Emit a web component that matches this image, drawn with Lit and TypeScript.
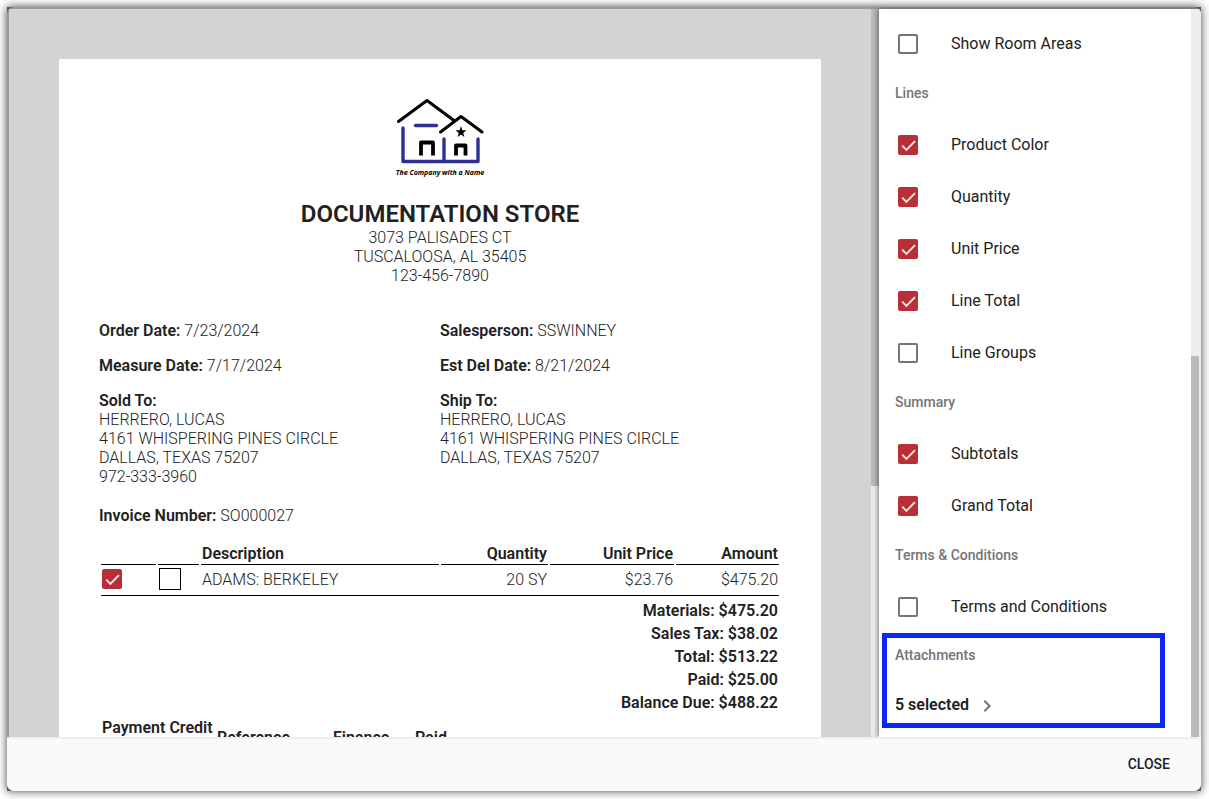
import { LitElement, html, css, svg } from "lit";
import { customElement, property } from "lit/decorators.js";

@customElement("tick-box")
export class TickBox extends LitElement {
  @property({ type: Boolean }) checked = false;
  @property({ type: Boolean }) plain = false;
  @property() label = "";
  @property() caption = "";

  static styles = css`
    :host { display: block; }
    .field { display: flex; align-items: center; cursor: pointer; }
    .box { display: grid; width: 20px; height: 20px; flex: none; }
    .plain { width: 22px; height: 22px; }
    .input, .mark { grid-area: 1 / 1; width: 100%; height: 100%; }
    .input {
      appearance: none; margin: 0; box-sizing: border-box;
      border: 2px solid #757575; border-radius: 2px; background: #fff;
    }
    .input:checked { background: #b92f37; border-color: #b92f37; }
    .plain .input { border: 1px solid #000; border-radius: 0; }
    .mark { pointer-events: none; z-index: 1; }
    .text { padding: 0 0 2px 33px; white-space: nowrap; }
  `;

  render() {
    return html`
      <label class="field">
        <span class="box ${this.plain ? "plain" : ""}">
          <input class="input" type="checkbox" .checked=${this.checked} aria-label=${this.label || this.caption} />
          ${this.checked
            ? html`<svg class="mark" viewBox="0 0 20 20" fill="none" stroke="#f7e4e5" stroke-width="1.9">
                <path d="M4.2 10.6 8.4 14.8 17 6.2" />
              </svg>`
            : ""}
        </span>
        ${this.caption ? html`<span class="text">${this.caption}</span>` : ""}
      </label>
    `;
  }
}

interface Option { name: string; on: boolean; }
interface Group { title: string; options: Option[]; }

const groups: Group[] = [
  { title: "", options: [{ name: "Show Room Areas", on: false }] },
  {
    title: "Lines",
    options: [
      { name: "Product Color", on: true },
      { name: "Quantity", on: true },
      { name: "Unit Price", on: true },
      { name: "Line Total", on: true },
      { name: "Line Groups", on: false },
    ],
  },
  {
    title: "Summary",
    options: [
      { name: "Subtotals", on: true },
      { name: "Grand Total", on: true },
    ],
  },
  { title: "Terms & Conditions", options: [{ name: "Terms and Conditions", on: false }] },
];

const totals: [string, string][] = [
  ["Materials:", "$475.20"],
  ["Sales Tax:", "$38.02"],
  ["Total:", "$513.22"],
  ["Paid:", "$25.00"],
  ["Balance Due:", "$488.22"],
];

const logoLines = svg`
  <g fill="none" stroke="#2e3192" stroke-width="3.4" stroke-linecap="round" stroke-linejoin="round">
    <path d="M13 29V62.500H88V40" />
    <path d="M54 40V62" />
    <path d="M25.500 26.500H46.500" />
  </g>
  <g fill="none" stroke="#000" stroke-width="3" stroke-linecap="round" stroke-linejoin="round">
    <path d="M8.500 22.500 37 1.500 64 21.500" />
    <path d="M50.500 33 71 17.500 92 33" />
  </g>
  <g fill="none" stroke="#000" stroke-width="3.800" stroke-linejoin="round">
    <path d="M31 56.500V43.500H43V56.500" />
    <path d="M66 56.500V46.500H75.500V56.500" />
  </g>
  <path d="M71 27 72.300 31.200 76.400 31.300 73.200 33.900 74.400 38 71 35.500 67.600 38 68.800 33.900 65.600 31.300 69.700 31.200Z" />
`;

@customElement("app-root")
export class AppRoot extends LitElement {
  static styles = css`
    :host {
      display: block; box-sizing: border-box; height: 100vh; padding: 7px 8px 8px 7px;
      background: #fff; overflow: hidden;
      font-family: Roboto, "Liberation Sans", sans-serif; font-size: 16px; line-height: 19px; color: #212121;
    }
    .backdrop { height: 100%; background: #55565a; box-shadow: 0 0 9px rgba(0, 0, 0, 0.75); }
    .dialog {
      height: 100%; display: flex; flex-direction: column; overflow: hidden;
      border-radius: 7px; background: #999;
    }
    .body { flex: 1; min-height: 0; display: flex; padding: 2px 0 0 2px; overflow: hidden; }
    .preview { flex: 1; min-width: 0; display: flex; background: #d3d3d3; }
    .viewport { flex: 1; min-width: 0; overflow: hidden; padding: 50px 50px 0; }
    .sheet { background: #fff; padding: 40px; min-height: 1000px; font-weight: 300; }
    .bar { width: 8px; flex: none; background: #ededed; display: flex; flex-direction: column; }
    .thumb { background: #bababa; }
    .thumb-top { height: 477px; }
    .thumb-low { flex: 1; margin-top: 347px; }

    .head { text-align: center; }
    .logo { display: block; margin: 0 auto; width: 100px; height: 80px; }
    .logo-text { font: italic 700 7px "Open Sans", sans-serif; }
    .store { margin: 21px 0 0; font-size: 24px; line-height: 28px; font-weight: 600; }
    .facts { display: grid; grid-template-columns: 1fr 1fr; row-gap: 16px; margin: 36px 0 20px; }
    .strong, .table th, .totals { font-weight: 600; }

    .table { width: 100%; margin-top: 16px; border-spacing: 2px; table-layout: fixed; }
    .table th, .table td { padding: 1px; }
    .lines th { border-bottom: 1px solid #000; }
    .lines .row td { padding-bottom: 3px; }
    .left { text-align: left; }
    .right { text-align: right; }
    .c1 { width: 55px; } .c2 { width: 41px; } .c4 { width: 107px; } .c5 { width: 124px; } .c6 { width: 103px; }
    .rule { border-top: 1px solid #000; height: 0; }
    .totals td { text-align: right; }
    .table.payments { margin-top: 0; }
    .p1 { width: 113px; } .p2 { width: 114px; } .p3 { width: 80px; }

    .panel {
      width: 320px; flex: none; display: flex; background: #fff; border-right: 2px solid #ededed; position: relative;
      box-shadow: -1px 0 5px rgba(0, 0, 0, 0.5);
    }
    .options { flex: 1; overflow: hidden; padding-top: 9px; }
    .caption {
      padding: 0 0 2px 16px; line-height: 47px; font-size: 14px; font-weight: 500; color: #757575; margin: 0;
    }
    .option { display: flex; align-items: center; height: 52px; padding-left: 19px; }
    .attachments { border: 5px solid #0a28f0; margin: 0 26px 0 3px; }
    .attachments .caption { padding-left: 8px; line-height: 34px; }
    .picker {
      display: flex; align-items: center; gap: 6px; padding: 12px 8px 0; height: 49px; border: 0;
      background: none; font: inherit; font-weight: 600; color: inherit;
    }
    .chevron { width: 24px; height: 24px; margin-top: 2px; }

    .footer {
      height: 50px; flex: none; border-top: 2px solid #eee; background: #fafafa; padding: 0 23px 2px 0;
      display: flex; align-items: center; justify-content: flex-end;
    }
    .close {
      border: 0; background: none; padding: 8px; font: inherit; font-size: 14px; font-weight: 500; color: #212121;
    }
  `;

  private fact(label: string, value: string) {
    return html`<div><span class="strong">${label}</span> ${value}</div>`;
  }

  render() {
    return html`
      <div class="backdrop">
        <div class="dialog" role="dialog" aria-label="Documentation Store">
          <div class="body">
            <main class="preview">
              <div class="viewport">
                <article class="sheet">
                  <header class="head">
                    <svg class="logo" viewBox="0 0 100 80" role="img" aria-label="Company logo">
                      ${logoLines}
                      <text class="logo-text" x="50" y="76" text-anchor="middle">The Company with a Name</text>
                    </svg>
                    <h1 class="store">DOCUMENTATION STORE</h1>
                    <div>3073 PALISADES CT</div>
                    <div>TUSCALOOSA, AL 35405</div>
                    <div>123-456-7890</div>
                  </header>
                  <section class="facts">
                    ${this.fact("Order Date:", "7/23/2024")} ${this.fact("Salesperson:", "SSWINNEY")}
                    ${this.fact("Measure Date:", "7/17/2024")} ${this.fact("Est Del Date:", "8/21/2024")}
                    <div>
                      <div class="strong">Sold To:</div>
                      <div>HERRERO, LUCAS</div>
                      <div>4161 WHISPERING PINES CIRCLE</div>
                      <div>DALLAS, TEXAS 75207</div>
                      <div>972-333-3960</div>
                    </div>
                    <div>
                      <div class="strong">Ship To:</div>
                      <div>HERRERO, LUCAS</div>
                      <div>4161 WHISPERING PINES CIRCLE</div>
                      <div>DALLAS, TEXAS 75207</div>
                    </div>
                  </section>
                  ${this.fact("Invoice Number:", "SO000027")}
                  <table class="table lines">
                    <colgroup>
                      <col class="c1" /><col class="c2" /><col /><col class="c4" /><col class="c5" /><col class="c6" />
                    </colgroup>
                    <thead>
                      <tr>
                        <th></th>
                        <th></th>
                        <th class="left">Description</th>
                        <th class="right">Quantity</th>
                        <th class="right">Unit Price</th>
                        <th class="right">Amount</th>
                      </tr>
                    </thead>
                    <tbody>
                      <tr class="row">
                        <td><tick-box checked label="Include line"></tick-box></td>
                        <td><tick-box plain label="Group line"></tick-box></td>
                        <td>ADAMS: BERKELEY</td>
                        <td class="right">20 SY</td>
                        <td class="right">$23.76</td>
                        <td class="right">$475.20</td>
                      </tr>
                      <tr><td class="rule" colspan="6"></td></tr>
                    </tbody>
                    <tfoot class="totals">
                      ${totals.map(([k, v]) => html`<tr><td colspan="6">${k} ${v}</td></tr>`)}
                    </tfoot>
                  </table>
                  <table class="table payments">
                    <colgroup><col class="p1" /><col class="p2" /><col class="p3" /><col /></colgroup>
                    <thead>
                      <tr>
                        <th class="left">Payment Credit<br />&nbsp;</th>
                        <th class="left">Reference</th>
                        <th class="left">Finance</th>
                        <th class="left">Paid</th>
                      </tr>
                    </thead>
                  </table>
                </article>
              </div>
              <div class="bar"><div class="thumb thumb-top"></div></div>
            </main>
            <aside class="panel">
              <div class="options">
                ${groups.map(
                  (g) => html`
                    <section>
                      ${g.title ? html`<h2 class="caption">${g.title}</h2>` : ""}
                      ${g.options.map(
                        (o) => html`<div class="option"><tick-box .checked=${o.on} .caption=${o.name}></tick-box></div>`
                      )}
                    </section>
                  `
                )}
                <section class="attachments">
                  <h2 class="caption">Attachments</h2>
                  <button class="picker" type="button">
                    5 selected
                    <svg class="chevron" viewBox="0 0 24 24" fill="none" stroke="#757575" stroke-width="2">
                      <path d="M9.300 6.700 14.600 12 9.300 17.300" />
                    </svg>
                  </button>
                </section>
              </div>
              <div class="bar"><div class="thumb thumb-low"></div></div>
            </aside>
          </div>
          <footer class="footer"><button class="close" type="button">CLOSE</button></footer>
        </div>
      </div>
    `;
  }
}
